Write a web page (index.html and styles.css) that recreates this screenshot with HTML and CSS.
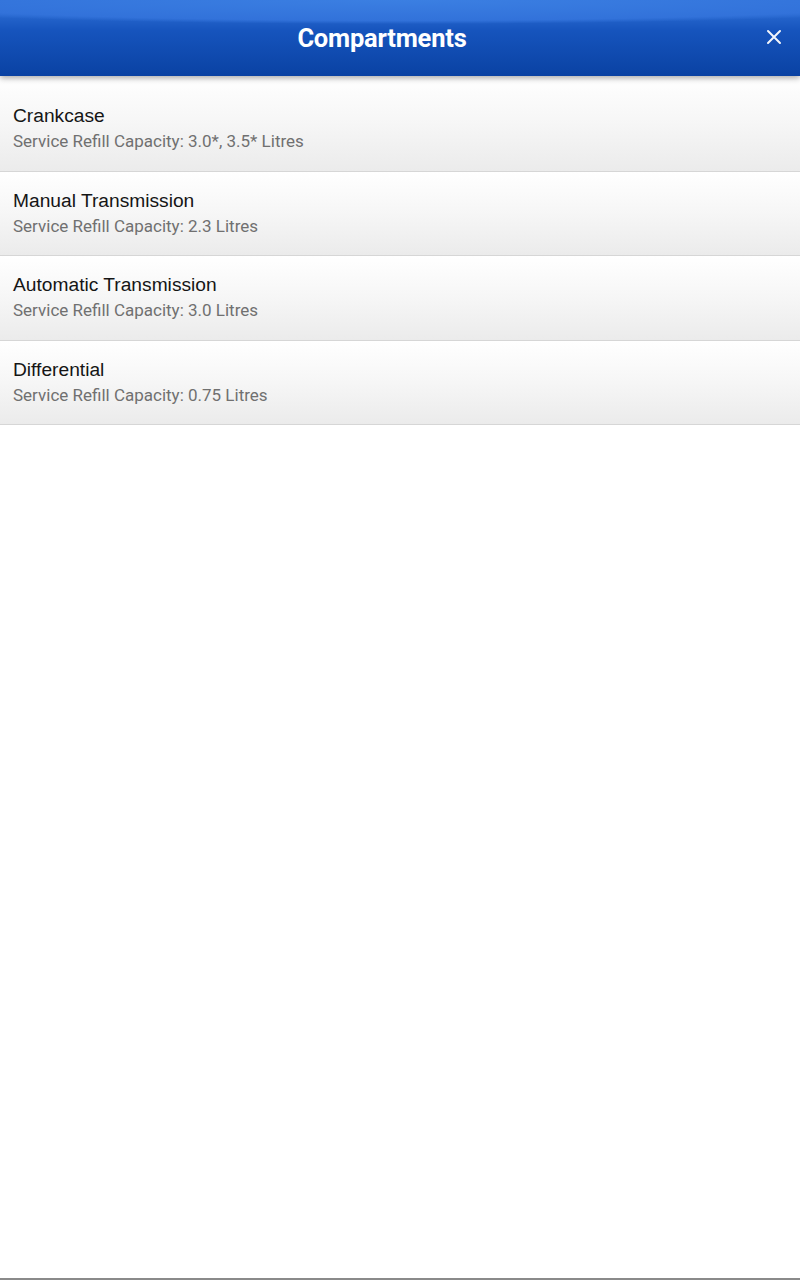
FILE: index.html
```html
<!DOCTYPE html>
<html lang="en">

<head>
    <meta charset="utf-8" />
    <meta name="viewport" content="width=device-width, initial-scale=1">
    <title>Compartments</title>
    <link rel="stylesheet" href="styles.css">
</head>

<body>
    <div class="page">
        <header class="titlebar">
            <h1>Compartments</h1>
            <button class="close" aria-label="Close">
                <svg width="16" height="16" viewBox="0 0 16 16">
                    <path d="M2 2 L14 14 M14 2 L2 14" stroke="#f2f5fb" stroke-width="2" stroke-linecap="round" />
                </svg>
            </button>
        </header>

        <ul class="compartments">
            <li>
                <div class="name">Crankcase</div>
                <div class="capacity">Service Refill Capacity: 3.0*, 3.5* Litres</div>
            </li>
            <li>
                <div class="name">Manual Transmission</div>
                <div class="capacity">Service Refill Capacity: 2.3 Litres</div>
            </li>
            <li>
                <div class="name">Automatic Transmission</div>
                <div class="capacity">Service Refill Capacity: 3.0 Litres</div>
            </li>
            <li>
                <div class="name">Differential</div>
                <div class="capacity">Service Refill Capacity: 0.75 Litres</div>
            </li>
        </ul>
    </div>
</body>

</html>
```

FILE: styles.css
```css
:root {
    --blue-light: #3577dc;
    --blue: #1654bd;
    --blue-dark: #0a42a3;
    --text-color: #151515;
    --muted-color: #707070;
    --border-color: #d6d6d6;
}

* {
    box-sizing: border-box;
}

body {
    margin: 0;
    background-color: #fff;
    font-family: 'Liberation Sans', Arial, sans-serif;
}

.page {
    height: 1280px;
    display: flex;
    flex-direction: column;
    border-bottom: 2px solid #8a8a8a;
}

.titlebar {
    position: relative;
    z-index: 1;
    height: 76px;
    display: flex;
    align-items: center;
    justify-content: center;
    background:
        radial-gradient(ellipse 75% 24px at 50% 0, #3b7fe2 0, #3272da 85%, transparent 100%),
        linear-gradient(to bottom, var(--blue-light) 0, var(--blue) 40%, var(--blue-dark) 100%);
    box-shadow: 0 2px 6px rgba(0, 0, 0, 0.35);
}

.titlebar h1 {
    margin: 0;
    color: #fff;
    font-family: Roboto, sans-serif;
    font-weight: 700;
    font-size: 25.5px;
    letter-spacing: -0.2px;
    padding-right: 36px;
}

.close {
    position: absolute;
    right: 18px;
    top: 29px;
    padding: 0;
    border: 0;
    background: none;
    cursor: pointer;
    display: flex;
}

.compartments {
    list-style: none;
    margin: 0;
    padding: 0;
}

.compartments li {
    padding: 18px 13px 16px;
    height: 84.5px;
    background: linear-gradient(to bottom, #ffffff 0, #f6f6f6 50%, #ebebeb 100%);
    border-bottom: 1.5px solid var(--border-color);
}

.compartments li:first-child {
    height: 95.5px;
    padding-top: 29px;
}

.name {
    color: var(--text-color);
    font-size: 19.2px;
    line-height: 22px;
}

.capacity {
    margin-top: 4px;
    color: var(--muted-color);
    font-family: Roboto, sans-serif;
    font-size: 17px;
    line-height: 20px;
}
```
